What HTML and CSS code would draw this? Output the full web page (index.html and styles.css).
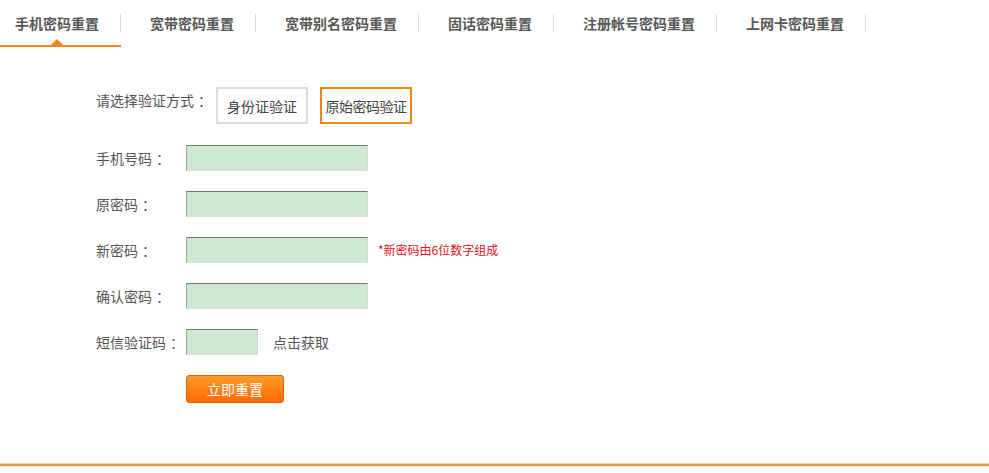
FILE: index.html
```html
<!DOCTYPE html>
<html lang="zh-CN">
<head>
<meta charset="utf-8">
<title>密码重置</title>
<link rel="stylesheet" href="styles.css">
</head>
<body>
<ul class="tabs">
  <li class="tab active"><a class="tab-link">手机密码重置</a></li>
  <li class="tab"><a class="tab-link">宽带密码重置</a></li>
  <li class="tab"><a class="tab-link">宽带别名密码重置</a></li>
  <li class="tab"><a class="tab-link">固话密码重置</a></li>
  <li class="tab"><a class="tab-link">注册帐号密码重置</a></li>
  <li class="tab"><a class="tab-link">上网卡密码重置</a></li>
</ul>

<div class="form">
  <div class="method-row">
    <span class="method-label">请选择验证方式<span class="colon">：</span></span>
    <span class="method">身份证验证</span>
    <span class="method selected">原始密码验证</span>
  </div>
  <div class="row">
    <label class="label">手机号码<span class="colon">：</span></label>
    <input class="field" type="text">
  </div>
  <div class="row">
    <label class="label">原密码<span class="colon">：</span></label>
    <input class="field" type="password">
  </div>
  <div class="row">
    <label class="label">新密码<span class="colon">：</span></label>
    <input class="field" type="password">
    <span class="hint">*新密码由6位数字组成</span>
  </div>
  <div class="row">
    <label class="label">确认密码<span class="colon">：</span></label>
    <input class="field" type="password">
  </div>
  <div class="row">
    <label class="label">短信验证码<span class="colon">：</span></label>
    <input class="field short" type="text">
    <a class="get-code">点击获取</a>
  </div>
  <div class="row">
    <span class="label"></span>
    <button class="submit" type="button">立即重置</button>
  </div>
</div>

<div class="footer-line"></div>
</body>
</html>
```

FILE: styles.css
```css
* { box-sizing: border-box; }
body {
  margin: 0;
  background: #fff;
  font-family: "Noto Sans CJK SC", "Noto Sans", "Liberation Sans", sans-serif;
  font-size: 14px;
  color: #555;
}
.tabs {
  list-style: none;
  margin: 0;
  padding: 0;
  display: flex;
  height: 47px;
}
.tab {
  display: flex;
  align-items: stretch;
  padding-left: 29px;
  border-bottom: 2px solid transparent;
}
.tab:first-child { padding-left: 15px; }
.tab::after {
  content: "";
  align-self: center;
  width: 1px;
  height: 18px;
  margin-left: 21px;
  background: #dedede;
}
.tab-link {
  position: relative;
  display: flex;
  align-items: center;
  font-weight: bold;
  color: #585858;
  line-height: 20px;
  cursor: pointer;
}
.tab.active { border-bottom-color: #f08519; }
.tab.active .tab-link::after {
  content: "";
  position: absolute;
  left: 50%;
  bottom: 0;
  margin-left: -6px;
  border-left: 6px solid transparent;
  border-right: 6px solid transparent;
  border-bottom: 6px solid #f08519;
}
.colon {
  padding-left: 4px;
}

.form {
  padding: 40px 0 0 96px;
  display: flex;
  flex-direction: column;
  gap: 20px;
}
.method-row {
  display: flex;
  align-items: flex-start;
  margin-bottom: 1px;
}
.method-label {
  line-height: 20px;
  margin-top: 3px;
  width: 120px;
}
.method {
  width: 92px;
  height: 37px;
  border: 2px solid #dcdcdc;
  display: flex;
  align-items: center;
  justify-content: center;
  color: #444;
  margin-right: 12px;
  line-height: 20px;
  cursor: pointer;
}
.method.selected {
  border-color: #f08519;
  letter-spacing: -0.5px;
}
.row {
  display: flex;
  align-items: center;
  height: 26px;
}
.label {
  width: 90px;
  line-height: 20px;
}
.field {
  width: 182px;
  height: 26px;
  margin: 0;
  padding: 0 4px;
  background: #cce8cf;
  border-style: solid;
  border-width: 1px;
  border-color: #767676 #d6d6d6 #dedede #a6a6a6;
  font: inherit;
  outline: none;
}
.field.short { width: 72px; }
.hint {
  margin-left: 10px;
  color: #e3101a;
  font-size: 12px;
  line-height: 16px;
}
.get-code {
  margin-left: 15px;
  color: #555;
  line-height: 20px;
  cursor: pointer;
}
.row:last-child {
  height: 28px;
}
.submit {
  width: 98px;
  height: 28px;
  margin: 0;
  padding: 0;
  border: 1px solid #e0600a;
  border-radius: 3px;
  background: linear-gradient(#ff9a2a, #ff6a00);
  color: #fff;
  font: inherit;
  font-size: 14px;
  line-height: 20px;
  cursor: pointer;
}
.footer-line {
  margin-top: 60px;
  height: 4px;
  border-top: 1px solid #f4d6a2;
  border-bottom: 1px solid #f8e7c9;
  background: #e09f48;
}
```
